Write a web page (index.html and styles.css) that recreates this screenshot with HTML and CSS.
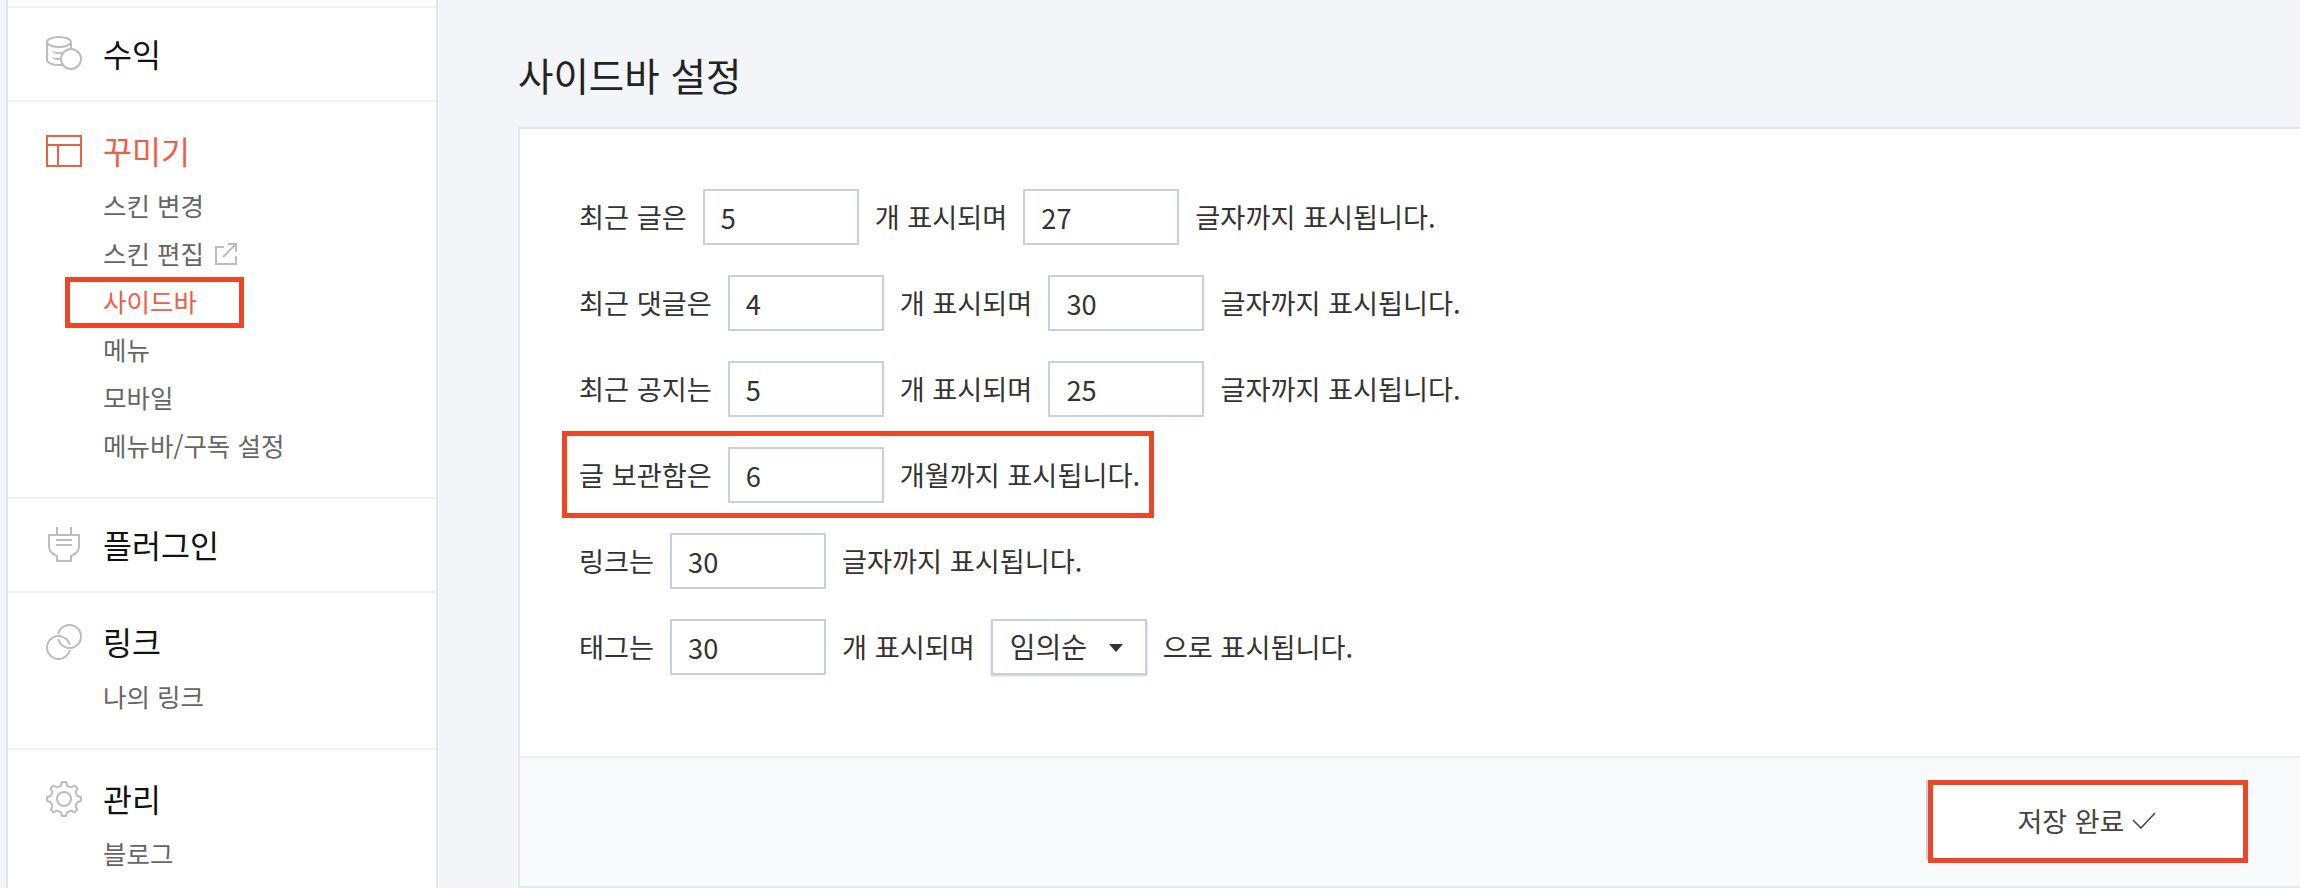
FILE: index.html
```html
<!DOCTYPE html>
<html lang="ko">
<head>
  <meta charset="UTF-8">
  <meta name="viewport" content="width=device-width, initial-scale=1.0">
  <title>사이드바 설정</title>
  <link rel="stylesheet" href="styles.css">
</head>
<body>
  <nav class="sidebar">
    <div class="side-top"></div>

    <section class="side-group">
      <h3 class="side-head">
        <svg class="side-icon" viewBox="0 0 36 36" fill="#fff" stroke="#bdbdbd" stroke-width="2">
          <path d="M1 6v6c0 2.8 5.400 5 12 5s12-2.200 12-5V6"/>
          <path d="M1 12v6c0 2.800 5.400 5 12 5h4"/>
          <path d="M1 18v6c0 2.800 5.400 5 12 5h4"/>
          <ellipse cx="13" cy="6" rx="12" ry="5"/>
          <circle cx="25" cy="23" r="10"/>
        </svg>
        수익
      </h3>
    </section>

    <section class="side-group has-sub">
      <h3 class="side-head is-on">
        <svg class="side-icon" viewBox="0 0 36 36" fill="none" stroke="#ee5f4a" stroke-width="2">
          <rect x="1" y="3" width="34" height="30"/>
          <path d="M1 12h34M12 12v21"/>
        </svg>
        꾸미기
      </h3>
      <ul class="side-sub">
        <li>스킨 변경</li>
        <li>스킨 편집
          <svg class="ext-icon" viewBox="0 0 22 22" fill="none" stroke="#bdbdbd" stroke-width="2">
            <path d="M9 4H1v17h20v-8"/>
            <path d="M8 14L21 1M13 1h8v8"/>
          </svg>
        </li>
        <li class="is-on">사이드바<span class="mark mark-side"></span></li>
        <li>메뉴</li>
        <li>모바일</li>
        <li>메뉴바/구독 설정</li>
      </ul>
    </section>

    <section class="side-group">
      <h3 class="side-head">
        <svg class="side-icon" viewBox="0 0 36 36" fill="none" stroke="#bdbdbd" stroke-width="2">
          <path d="M11 0v8M25 0v8"/>
          <path d="M3 8h30v11c0 4-2 7-6 9l-2 1v5H11v-5l-2-1c-4-2-6-5-6-9z"/>
          <path d="M10 13h16M10 18h16"/>
        </svg>
        플러그인
      </h3>
    </section>

    <section class="side-group has-sub">
      <h3 class="side-head">
        <svg class="side-icon" viewBox="0 0 36 36" fill="none" stroke="#bdbdbd" stroke-width="2">
          <path d="M12.250 10.100A11.500 11.500 0 1 1 12.250 14.900"/>
          <path d="M23.750 25.900A11.500 11.500 0 1 1 23.750 21.100"/>
        </svg>
        링크
      </h3>
      <ul class="side-sub">
        <li>나의 링크</li>
      </ul>
    </section>

    <section class="side-group has-sub">
      <h3 class="side-head">
        <svg class="side-icon" viewBox="0 0 36 36" fill="none" stroke="#bdbdbd" stroke-width="2" stroke-linejoin="round">
          <path d="M14.730 4.900L15.930 1.120H20.070L21.270 4.900L24.950 6.430L28.470 4.600L31.400 7.530L29.570 11.050L31.100 14.730L34.880 15.930V20.070L31.100 21.270L29.570 24.950L31.400 28.470L28.470 31.400L24.950 29.570L21.270 31.100L20.070 34.880H15.930L14.730 31.100L11.050 29.570L7.530 31.400L4.600 28.470L6.430 24.950L4.900 21.270L1.120 20.070V15.930L4.900 14.730L6.430 11.050L4.600 7.530L7.530 4.600L11.050 6.430z"/>
          <circle cx="18" cy="18" r="7"/>
        </svg>
        관리
      </h3>
      <ul class="side-sub">
        <li>블로그</li>
      </ul>
    </section>
  </nav>

  <main class="content">
    <h1 class="page-title">사이드바 설정</h1>
    <div class="card">
      <form class="card-body">
        <div class="row">최근 글은 <input class="field" value="5"> 개 표시되며 <input class="field" value="27"> 글자까지 표시됩니다.</div>
        <div class="row">최근 댓글은 <input class="field" value="4"> 개 표시되며 <input class="field" value="30"> 글자까지 표시됩니다.</div>
        <div class="row">최근 공지는 <input class="field" value="5"> 개 표시되며 <input class="field" value="25"> 글자까지 표시됩니다.</div>
        <div class="row">글 보관함은 <input class="field" value="6"> 개월까지 표시됩니다.<span class="mark mark-row"></span></div>
        <div class="row">링크는 <input class="field" value="30"> 글자까지 표시됩니다.</div>
        <div class="row">태그는 <input class="field" value="30"> 개 표시되며 <span class="select">임의순</span> 으로 표시됩니다.</div>
      </form>
      <div class="card-foot">
        <button class="save-btn" type="button">
          저장 완료
          <svg class="check" viewBox="0 0 24 17" fill="none" stroke="#444" stroke-width="1.500"><path d="M1 8l8 8L23 1"/></svg>
          <span class="mark mark-btn"></span>
        </button>
      </div>
    </div>
  </main>
</body>
</html>
```
FILE: styles.css
```css
* { box-sizing: border-box; }

body {
  margin: 0;
  height: 888px;
  overflow: hidden;
  display: flex;
  background-color: #f3f5f8;
  font-family: "Noto Sans CJK KR", "Noto Sans", sans-serif;
  color: #333;
}

/* annotation boxes drawn over the shot */
.mark { position: absolute; border: 5px solid #ee4527; pointer-events: none; }
.mark-side { left: 57px; top: -1px; width: 179px; height: 51px; }
.mark-row { left: -17px; top: -16px; width: 592px; height: 87px; }
.mark-btn { left: 0; top: -2px; width: 320px; height: 83px; }

.sidebar {
  width: 432px;
  margin-left: 6px;
  flex: none;
  background-color: #fff;
  border-left: 2px solid #e2e6ef;
  border-right: 2px solid #e2e6ef;
}

.side-top { height: 8px; border-bottom: 2px solid #f0f1f5; }

.side-group { padding: 24px 0; border-bottom: 2px solid #f0f1f5; }
.side-group.has-sub { padding: 27px 0; }

.side-head {
  display: flex;
  align-items: center;
  gap: 21px;
  height: 44px;
  margin: 0;
  padding: 0 0 3px 38px;
  font-size: 31.500px;
  font-weight: 400;
  color: #111;
}
.side-head.is-on { color: #ee5f4a; }

.side-icon { width: 36px; height: 36px; flex: none; margin-bottom: -3px; }

.side-sub { list-style: none; margin: 9px 0 0; padding: 0; }
.side-sub li {
  position: relative;
  height: 48px;
  line-height: 46px;
  padding-left: 95px;
  font-size: 25.500px;
  color: #666;
}
.side-sub li.is-on { color: #ee5f4a; }

.ext-icon { width: 22px; height: 22px; margin-left: 4px; vertical-align: -1px; }

.content { flex: 1; min-width: 0; padding: 49px 0 0 80px; }

.page-title {
  margin: 0 0 25px;
  height: 53px;
  line-height: 51px;
  font-size: 38.500px;
  font-weight: 400;
  color: #222;
}

.card {
  background-color: #fff;
  border: 2px solid #e4e8f0;
  border-right: 0;
  height: 761px;
  display: flex;
  flex-direction: column;
}

.card-body {
  flex: 1;
  padding: 60px 0 0 59px;
  display: flex;
  flex-direction: column;
  gap: 30px;
  border-bottom: 2px solid #f0f1f5;
}

.row {
  position: relative;
  display: flex;
  align-items: center;
  gap: 16px;
  height: 56px;
  padding-bottom: 3px;
  font-size: 27.200px;
  white-space: nowrap;
}

.field {
  width: 156px;
  height: 56px;
  margin-bottom: -3px;
  padding: 0 16px;
  border: 2px solid #c8d0de;
  border-radius: 0;
  outline: 0;
  font: inherit;
  color: #333;
}

.select {
  position: relative;
  width: 156px;
  height: 56px;
  margin-bottom: -3px;
  padding-left: 17px;
  line-height: 50px;
  font-size: 28px;
  background-color: #fff;
  border: 2px solid #c8d0de;
  box-shadow: 0 1px 2px rgba(120, 130, 150, 0.4);
}
.select::after {
  content: "";
  position: absolute;
  right: 22px;
  top: 23px;
  border-left: 7px solid transparent;
  border-right: 7px solid transparent;
  border-top: 8px solid #333;
}

.card-foot {
  flex: none;
  height: 128px;
  padding: 22px 52px 0 0;
  display: flex;
  justify-content: flex-end;
  align-items: flex-start;
  background-color: #f9fafb;
}

.save-btn {
  position: relative;
  width: 322px;
  height: 80px;
  display: flex;
  align-items: center;
  justify-content: center;
  gap: 8px;
  background-color: #fff;
  border: 2px solid #c8d0de;
  font: inherit;
  font-size: 27px;
  color: #444;
}

.check { width: 24px; height: 17px; }
```
